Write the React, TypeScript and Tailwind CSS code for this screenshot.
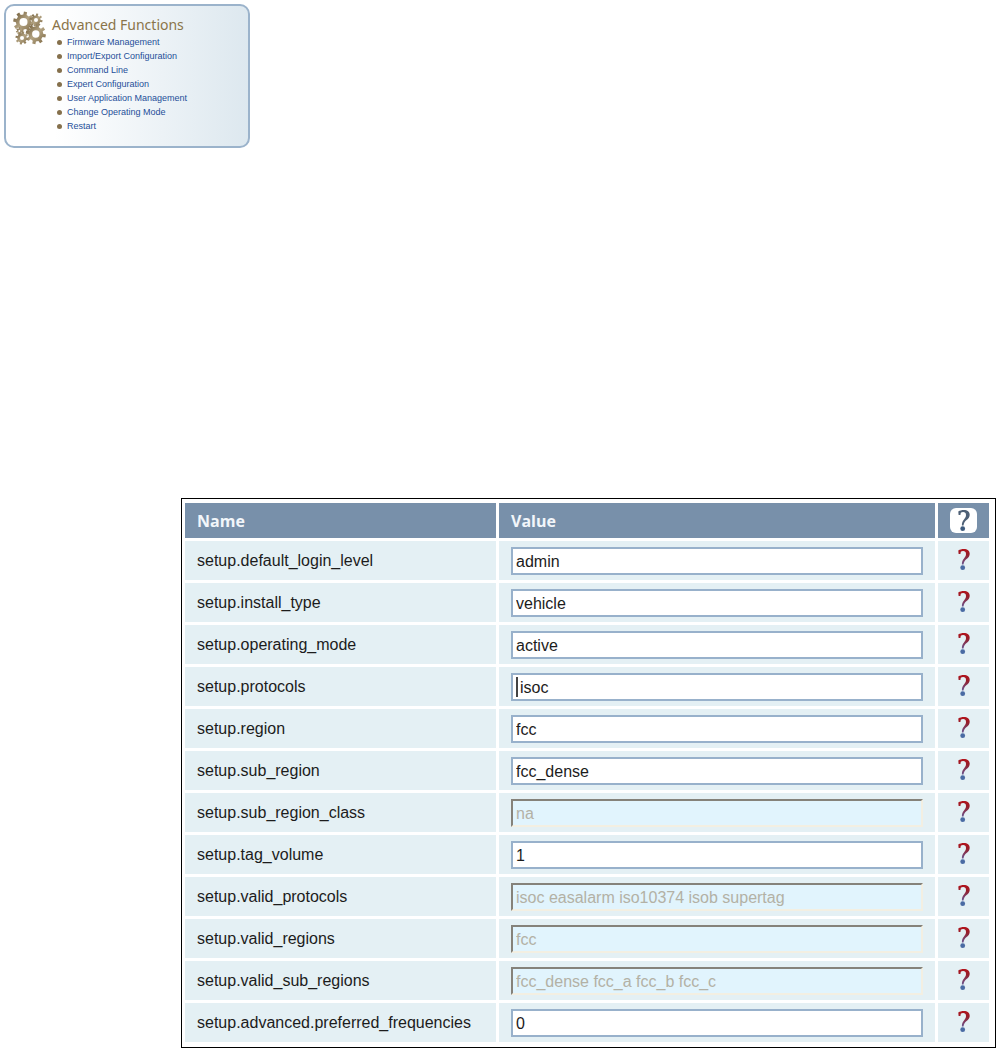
import React, { useState } from 'react';

interface Setting {
  name: string;
  value: string;
  disabled?: boolean;
  focused?: boolean;
}

const LINKS = [
  'Firmware Management',
  'Import/Export Configuration',
  'Command Line',
  'Expert Configuration',
  'User Application Management',
  'Change Operating Mode',
  'Restart',
];

const SETTINGS: Setting[] = [
  { name: 'setup.default_login_level', value: 'admin' },
  { name: 'setup.install_type', value: 'vehicle' },
  { name: 'setup.operating_mode', value: 'active' },
  { name: 'setup.protocols', value: 'isoc', focused: true },
  { name: 'setup.region', value: 'fcc' },
  { name: 'setup.sub_region', value: 'fcc_dense' },
  { name: 'setup.sub_region_class', value: 'na', disabled: true },
  { name: 'setup.tag_volume', value: '1' },
  { name: 'setup.valid_protocols', value: 'isoc easalarm iso10374 isob supertag', disabled: true },
  { name: 'setup.valid_regions', value: 'fcc', disabled: true },
  { name: 'setup.valid_sub_regions', value: 'fcc_dense fcc_a fcc_b fcc_c', disabled: true },
  { name: 'setup.advanced.preferred_frequencies', value: '0' },
];

// Outline of a gear with a round hole (filled with evenodd)
const gearPath = (cx: number, cy: number, outer: number, inner: number, hole: number, teeth: number) => {
  const step = (Math.PI * 2) / teeth;
  const at = (r: number, a: number) => `${(cx + r * Math.cos(a)).toFixed(2)} ${(cy + r * Math.sin(a)).toFixed(2)}`;
  let d = '';
  for (let i = 0; i < teeth; i++) {
    const a = i * step + 0.2;
    d += `${i === 0 ? 'M' : 'L'}${at(inner, a - step * 0.28)}L${at(outer, a - step * 0.2)}L${at(outer, a + step * 0.2)}L${at(inner, a + step * 0.28)}`;
  }
  return `${d}ZM${cx - hole} ${cy}a${hole} ${hole} 0 1 0 ${hole * 2} 0a${hole} ${hole} 0 1 0 ${-hole * 2} 0Z`;
};

const GearsIcon: React.FC = () => (
  <svg width="34" height="34" viewBox="0 0 34 34" className="shrink-0" aria-hidden="true">
    <defs>
      <linearGradient id="gear" x1="0" y1="0" x2="1" y2="1">
        <stop offset="0" stopColor="#66522f" />
        <stop offset="0.5" stopColor="#b3a382" />
        <stop offset="1" stopColor="#7a6540" />
      </linearGradient>
    </defs>
    <g fill="url(#gear)" fillRule="evenodd">
      <path d={gearPath(11.5, 11, 10.4, 7.6, 4, 8)} />
      <path d={gearPath(24, 9, 6.6, 4.6, 2, 8)} />
      <path d={gearPath(23.8, 23, 10.2, 7.4, 3.7, 8)} />
      <path d={gearPath(10, 27, 6.6, 4.8, 2, 8)} />
      <path d={gearPath(7.5, 20, 3.6, 2.6, 1.1, 7)} />
    </g>
  </svg>
);

const HelpMark: React.FC<{ paint: string }> = ({ paint }) => (
  <svg width="12" height="22" viewBox="0 0 12 22" aria-hidden="true">
    <path
      d="M.3 1.500C1.900.5 3.800 0 5.700 0c3.800 0 6 1.800 6 4.800 0 2.400-1.200 3.700-3.100 5.300C6.900 11.600 5.900 12.900 5.500 15.400H3.900C3.800 13 4.500 11.200 6 9.400 7.300 7.800 8 6.600 8 4.900 8 3.100 6.900 2.100 5.100 2.100c-1 0-1.800.2-2.300.6L2.400 4.900H.6Z"
      fill={paint}
    />
    <circle cx="4.700" cy="18.700" r="2.400" fill={paint === 'url(#helpRed)' ? '#4a6ba3' : '#3d5a7d'} />
  </svg>
);

const AdvancedFunctions: React.FC = () => (
  <nav className="ml-1 mt-1 flex h-[144px] w-[246px] gap-[6px] rounded-[10px] border-2 border-[#9bb3cb] bg-linear-to-r from-white from-20% to-[#dde8ef] pl-[6px] pt-[5px] font-['Liberation_Sans',Arial,sans-serif]">
    <GearsIcon />
    <div className="pt-1">
      <h2 className="font-['Noto_Sans',sans-serif] text-[14px] leading-5 text-[#8a7449]">Advanced Functions</h2>
      <ul className="pl-[5px]">
        {LINKS.map((link) => (
          <li key={link} className="flex h-[14px] items-center gap-[5px]">
            <span className="size-[5px] rounded-full bg-[#85704c]" />
            <a href="#" className="text-[9px] leading-[14px] whitespace-nowrap text-[#1f4f99]">{link}</a>
          </li>
        ))}
      </ul>
    </div>
  </nav>
);

const SettingRow: React.FC<{ setting: Setting }> = ({ setting }) => {
  const [value, setValue] = useState(setting.value);

  return (
    <tr className="h-[39px] bg-[#e4f0f4]">
      <td className="px-3">
        <label htmlFor={setting.name}>{setting.name}</label>
      </td>
      <td className="px-3">
        <div className="relative flex">
          <input
            id={setting.name}
            type="text"
            value={value}
            disabled={setting.disabled}
            onChange={(e) => setValue(e.target.value)}
            className={`h-7 w-full rounded-none border-2 pt-[2px] ${
              setting.disabled
                ? 'border-t-[#85827a] border-l-[#85827a] border-r-[#f3efe2] border-b-[#f3efe2] bg-[#e1f4fd] text-[#b3b1a5]'
                : 'border-[#98b1cb] bg-white text-[#1c1c1c]'
            } ${setting.focused ? 'px-[7px]' : 'px-[3px]'}`}
          />
          {/* text cursor of the active field */}
          {setting.focused && <span className="absolute top-[4px] left-[5px] h-5 w-[2px] bg-[#444]" />}
        </div>
      </td>
      <td className="pb-[2px] text-center">
        <button type="button" aria-label={`Help for ${setting.name}`} className="mx-auto block">
          <HelpMark paint="url(#helpRed)" />
        </button>
      </td>
    </tr>
  );
};

const SettingsTable: React.FC = () => (
  <div className="ml-[181px] border border-black bg-white pt-px pr-[3px] pb-[2px]">
    <svg width="0" height="0" className="absolute" aria-hidden="true">
      <defs>
        <linearGradient id="helpRed" x1="0" y1="0" x2="0" y2="1">
          <stop offset="0" stopColor="#b3121a" />
          <stop offset="0.4" stopColor="#94202d" />
          <stop offset="1" stopColor="#6a5590" />
        </linearGradient>
      </defs>
    </svg>
    <table className="w-full table-fixed border-separate border-spacing-[3px] font-['Liberation_Sans',Arial,sans-serif] text-[16px] leading-5 text-[#1c1c1c]">
      <colgroup>
        <col className="w-[311px]" />
        <col />
        <col className="w-[51px]" />
      </colgroup>
      <thead>
        <tr className="h-[35px] bg-[#7890aa] text-left font-['Open_Sans',sans-serif] text-[16px] text-[#f2f6fa]">
          <th className="px-3 font-bold">Name</th>
          <th className="px-3 font-bold">Value</th>
          <th>
            <button type="button" aria-label="Help" className="mx-auto flex h-[25px] w-[27px] items-center justify-center rounded-[6px] bg-white">
              <HelpMark paint="#4e6076" />
            </button>
          </th>
        </tr>
      </thead>
      <tbody>
        {SETTINGS.map((setting) => (
          <SettingRow key={setting.name} setting={setting} />
        ))}
      </tbody>
    </table>
  </div>
);

export default function App() {
  return (
    <main className="flex min-h-screen flex-col justify-between bg-white">
      <AdvancedFunctions />
      <SettingsTable />
    </main>
  );
}
